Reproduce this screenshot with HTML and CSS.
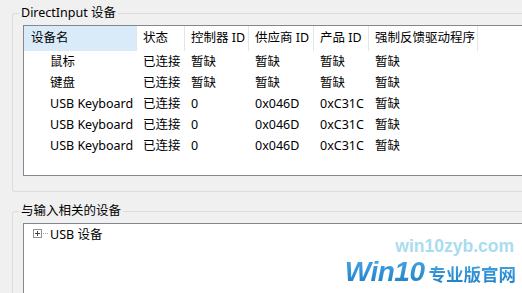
FILE: index.html
```html
<!DOCTYPE html>
<html lang="zh-CN">
<head>
    <meta charset="UTF-8">
    <title>DirectX 诊断工具 - 输入</title>
    <link rel="stylesheet" href="styles.css">
</head>
<body>
    <div class="page">
        <fieldset class="group">
            <legend>DirectInput 设备</legend>
            <div class="listview">
                <div class="lv-grid">
                    <div class="hd hot">设备名</div>
                    <div class="hd">状态</div>
                    <div class="hd">控制器 ID</div>
                    <div class="hd">供应商 ID</div>
                    <div class="hd">产品 ID</div>
                    <div class="hd">强制反馈驱动程序</div>

                    <div class="cell name">鼠标</div>
                    <div class="cell">已连接</div>
                    <div class="cell">暂缺</div>
                    <div class="cell">暂缺</div>
                    <div class="cell">暂缺</div>
                    <div class="cell">暂缺</div>

                    <div class="cell name">键盘</div>
                    <div class="cell">已连接</div>
                    <div class="cell">暂缺</div>
                    <div class="cell">暂缺</div>
                    <div class="cell">暂缺</div>
                    <div class="cell">暂缺</div>

                    <div class="cell name">USB Keyboard</div>
                    <div class="cell">已连接</div>
                    <div class="cell">0</div>
                    <div class="cell">0x046D</div>
                    <div class="cell">0xC31C</div>
                    <div class="cell">暂缺</div>

                    <div class="cell name">USB Keyboard</div>
                    <div class="cell">已连接</div>
                    <div class="cell">0</div>
                    <div class="cell">0x046D</div>
                    <div class="cell">0xC31C</div>
                    <div class="cell">暂缺</div>

                    <div class="cell name">USB Keyboard</div>
                    <div class="cell">已连接</div>
                    <div class="cell">0</div>
                    <div class="cell">0x046D</div>
                    <div class="cell">0xC31C</div>
                    <div class="cell">暂缺</div>
                </div>
            </div>
        </fieldset>

        <fieldset class="group second">
            <legend>与输入相关的设备</legend>
            <div class="treeview">
                <div class="tree-item">
                    <span class="expander"></span>
                    <span class="dots"></span>
                    <span class="tree-text">USB 设备</span>
                </div>
            </div>
        </fieldset>
    </div>

    <div class="watermark">
        <div class="wm-site">win10zyb.com</div>
        <div class="wm-brand"><span class="wm-win">Win10</span><span class="wm-cn">专业版官网</span></div>
    </div>
</body>
</html>
```

FILE: styles.css
```css
html, body {
    margin: 0;
    height: 100%;
    overflow: hidden;
}
body {
    background: #f0f0f0;
    font-family: "Noto Sans", "Noto Sans CJK SC", sans-serif;
    font-size: 12.5px;
    color: #000;
    position: relative;
}
.page {
    height: 100%;
    box-sizing: border-box;
    padding: 5px 0 0 12px;
    display: flex;
    flex-direction: column;
}
.group {
    margin: 0;
    min-width: 0;
    padding: 4px 0 15px 10px;
    border: 1px solid #dcdcdc;
    border-right: none;
    border-radius: 3px 0 0 3px;
}
.group legend {
    margin-left: -4px;
    padding: 0 2px;
    line-height: 16px;
}
.group.second {
    margin-top: 11px;
    flex: 1;
    padding-bottom: 0;
    border-bottom: none;
    border-radius: 3px 0 0 0;
    display: flex;
    flex-direction: column;
}
.listview {
    background: #fff;
    border: 1px solid #828790;
    border-right: none;
    height: 149px;
    overflow: hidden;
}
.lv-grid {
    display: grid;
    grid-template-columns: 113px 48px 64px 65px 55px 109px;
    grid-auto-rows: 21px;
    grid-template-rows: 25px;
}
.hd {
    border-right: 1px solid #e5e5e5;
    padding-left: 6px;
    line-height: 24px;
    white-space: nowrap;
}
.hd.hot {
    background: #d9ebf9;
    padding-left: 7px;
}
.cell {
    padding-left: 6px;
    line-height: 21px;
    white-space: nowrap;
}
.cell.name {
    padding-left: 26px;
}
.treeview {
    flex: 1;
    background: #fff;
    border: 1px solid #828790;
    border-right: none;
    border-bottom: none;
}
.tree-item {
    display: flex;
    align-items: center;
    height: 21px;
    padding-left: 9px;
    margin-top: -1px;
}
.expander {
    width: 7px;
    height: 7px;
    border: 1px solid #919191;
    position: relative;
    background: #fff;
}
.expander::before,
.expander::after {
    content: "";
    position: absolute;
    background: #444;
}
.expander::before {
    left: 1px;
    top: 3px;
    width: 5px;
    height: 1px;
}
.expander::after {
    left: 3px;
    top: 1px;
    width: 1px;
    height: 5px;
}
.dots {
    width: 5px;
    margin-left: 1px;
    border-top: 1px dotted #a0a0a0;
}
.tree-text {
    margin-left: 2px;
}
.watermark {
    position: absolute;
    right: 6px;
    bottom: 3px;
    text-align: right;
    font-family: "Liberation Sans", Arial, sans-serif;
    font-weight: bold;
}
.wm-site {
    color: #a9dcef;
    font-size: 17.5px;
    line-height: 18px;
    margin-right: 2px;
}
.wm-brand {
    margin-top: 4px;
    line-height: 26px;
    white-space: nowrap;
}
.wm-win {
    font-size: 28px;
    font-style: italic;
    letter-spacing: -0.5px;
    background: linear-gradient(#4aa9e6, #1b7cc6);
    -webkit-background-clip: text;
    background-clip: text;
    color: transparent;
}
.wm-cn {
    font-family: "Noto Sans CJK SC", sans-serif;
    font-size: 17.5px;
    margin-left: 4px;
    background: linear-gradient(#4aa9e6, #1b7cc6);
    -webkit-background-clip: text;
    background-clip: text;
    color: transparent;
}
```
